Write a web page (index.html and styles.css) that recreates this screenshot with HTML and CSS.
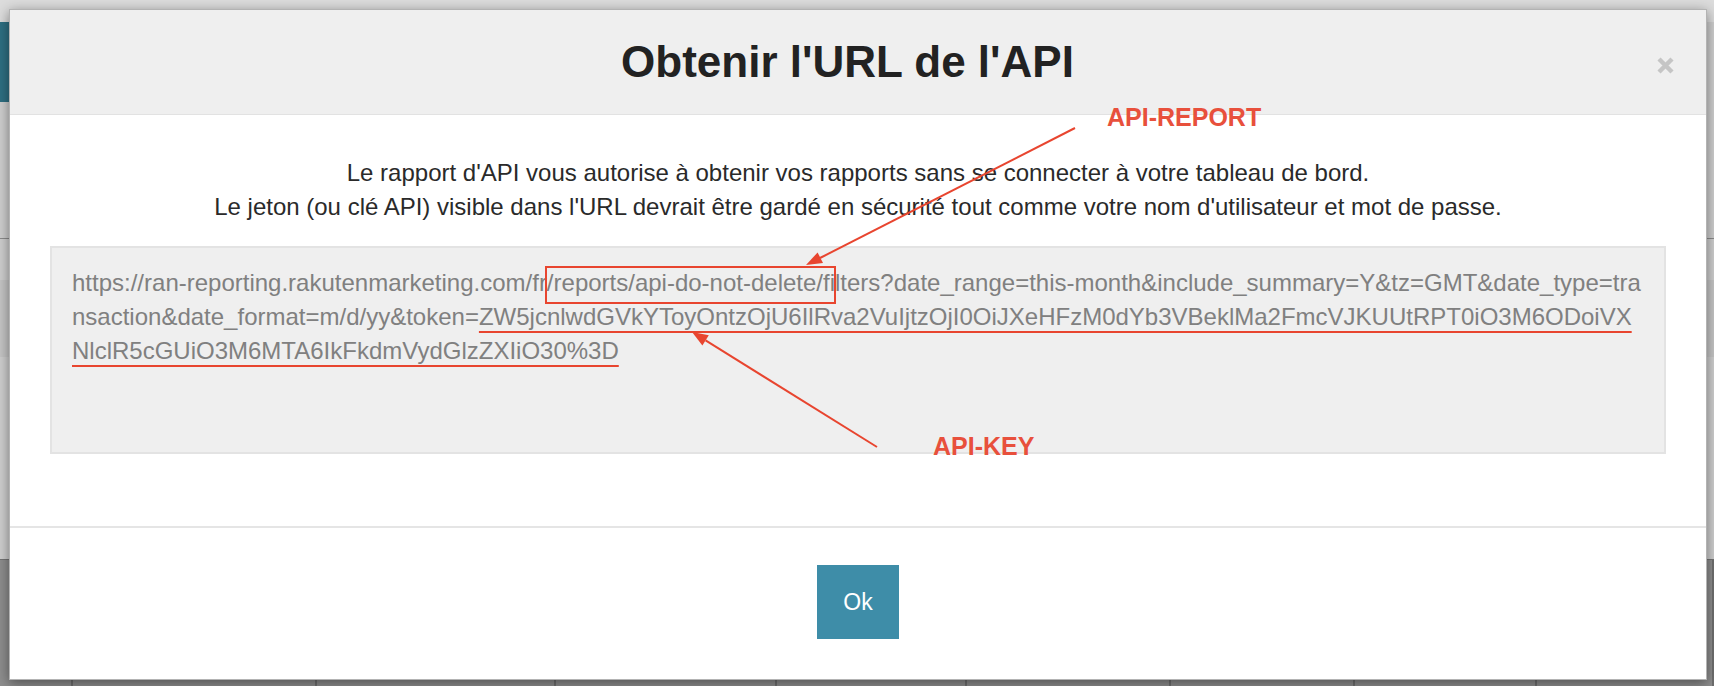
FILE: index.html
```html
<!DOCTYPE html>
<html lang="fr">
<head>
<meta charset="utf-8">
<title>Obtenir l'URL de l'API</title>
<link rel="stylesheet" href="styles.css">
</head>
<body>
<div class="backdrop">
  <div class="bd-top"></div>
  <div class="bd-nav"><div class="bd-btn"></div></div>
  <div class="bd-mid"></div>
  <div class="bd-gap"></div>
  <div class="bd-band"></div>
  <div class="bd-gap2"></div>
  <div class="bd-table">
    <div class="bd-col"></div><div class="bd-col"></div><div class="bd-col"></div><div class="bd-col"></div><div class="bd-col"></div><div class="bd-col"></div><div class="bd-col"></div><div class="bd-col"></div><div class="bd-col"></div>
  </div>
</div>

<div class="modal">
  <div class="modal-header">
    <h4 class="modal-title">Obtenir l'URL de l'API</h4>
    <button class="close" type="button" aria-label="Fermer">
      <svg width="17" height="17" viewBox="0 0 17 17"><path d="M2 2 L15 15 M15 2 L2 15" stroke="#c5c5c5" stroke-width="4.4" fill="none"/></svg>
    </button>
  </div>
  <div class="modal-body">
    <p class="intro">Le rapport d'API vous autorise à obtenir vos rapports sans se connecter à votre tableau de bord.<br>Le jeton (ou clé API) visible dans l'URL devrait être gardé en sécurité tout comme votre nom d'utilisateur et mot de passe.</p>
    <div class="url-box">
      <div class="url-text">https://ran-reporting.rakutenmarketing.com/fr/reports/api-do-not-delete/filters?date_range=this-month&amp;include_summary=Y&amp;tz=GMT&amp;date_type=tra<br>nsaction&amp;date_format=m/d/yy&amp;token=<span class="token">ZW5jcnlwdGVkYToyOntzOjU6IlRva2VuIjtzOjI0OiJXeHFzM0dYb3VBeklMa2FmcVJKUUtRPT0iO3M6ODoiVX</span><br><span class="token">NlclR5cGUiO3M6MTA6IkFkdmVydGlzZXIiO30%3D</span></div>
      <div class="mark-rect"></div>
    </div>
  </div>
  <div class="modal-footer">
    <button class="btn-ok" type="button">Ok</button>
  </div>
</div>

<svg class="annot" width="1714" height="686" viewBox="0 0 1714 686">
  <line x1="1075" y1="128" x2="820" y2="258" stroke="#e8452f" stroke-width="2"/>
  <polygon points="806,265 823,263.1 817.6,252.4" fill="#e8452f"/>
  <line x1="877" y1="447" x2="705.6" y2="340.4" stroke="#e8452f" stroke-width="2"/>
  <polygon points="692,332 708.8,335.3 702.4,345.5" fill="#e8452f"/>
</svg>
<div class="label label-report">API-REPORT</div>
<div class="label label-key">API-KEY</div>
</body>
</html>
```
FILE: styles.css
```css
* { box-sizing: border-box; }

html, body {
  margin: 0;
  padding: 0;
}

body {
  width: 1714px;
  height: 686px;
  overflow: hidden;
  position: relative;
  font-family: "Liberation Sans", Arial, sans-serif;
  background: #d0d0d0;
}

/* page behind the overlay */
.backdrop {
  height: 686px;
  display: flex;
  flex-direction: column;
  background: #cfcfcf;
}
.bd-top { height: 22px; background: #dcdcdc; }
.bd-nav { height: 80px; display: flex; }
.bd-btn { width: 40px; background: #2e6f82; }
.bd-mid { height: 137px; border-bottom: 1px solid #8c8c8c; }
.bd-gap { height: 41px; }
.bd-band { height: 77px; background: #c6c6c6; }
.bd-gap2 { height: 202px; }
.bd-table {
  flex: 1;
  background: #8e8e8e;
  border-top: 1px solid #747474;
  display: grid;
  grid-template-columns: 73px 244px 239px 221px 190px 204px 184px 182px 1fr;
}
.bd-col { border-right: 2px solid #6f6f6f; }

/* modal */
.modal {
  position: absolute;
  left: 9px;
  top: 9px;
  width: 1698px;
  height: 671px;
  border: 1px solid #b3b3b3;
  background: #fff;
  box-shadow: 0 3px 12px rgba(0, 0, 0, 0.45);
  display: flex;
  flex-direction: column;
}

.modal-header {
  height: 105px;
  flex: none;
  background: #efefef;
  border-bottom: 1px solid #e2e2e2;
  display: flex;
  align-items: center;
  padding: 0 30px;
}

.modal-title {
  flex: 1;
  margin: 0;
  text-align: center;
  font-size: 44px;
  font-weight: bold;
  color: #222;
  line-height: 1.15;
}

.close {
  flex: none;
  width: 21px;
  height: 21px;
  margin-top: 6px;
  padding: 0;
  border: 0;
  background: transparent;
  display: flex;
  align-items: center;
  justify-content: center;
}

.modal-body {
  flex: none;
  padding: 41px 40px 72px;
}

.intro {
  margin: 0;
  text-align: center;
  font-size: 24px;
  line-height: 34px;
  color: #2a2a2a;
}

.url-box {
  position: relative;
  margin-top: 22px;
  height: 208px;
  background: #efefef;
  border: 2px solid #e3e3e3;
  padding: 18px 20px;
}

.url-text {
  font-size: 24px;
  line-height: 34px;
  color: #808080;
  white-space: nowrap;
}

.token {
  text-decoration: underline;
  text-decoration-color: #e8452f;
  text-decoration-thickness: 2px;
  text-underline-offset: 6px;
  text-decoration-skip-ink: none;
}

.mark-rect {
  position: absolute;
  left: 493px;
  top: 18px;
  width: 291px;
  height: 38px;
  border: 2px solid #e8452f;
}

.modal-footer {
  flex: 1;
  border-top: 2px solid #e5e5e5;
  display: flex;
  justify-content: center;
  align-items: flex-start;
  padding-top: 37px;
}

.btn-ok {
  width: 82px;
  height: 74px;
  border: 0;
  border-radius: 0;
  background: #3e8da8;
  color: #fff;
  font-family: "Liberation Sans", Arial, sans-serif;
  font-size: 23px;
  padding: 0;
}

/* annotations drawn over the screenshot */
.annot {
  position: absolute;
  left: 0;
  top: 0;
  pointer-events: none;
}

.label {
  position: absolute;
  font-size: 25px;
  line-height: 25px;
  font-weight: bold;
  color: #e8503c;
  white-space: nowrap;
}
.label-report { left: 1107px; top: 105px; }
.label-key { left: 933px; top: 434px; }
```
